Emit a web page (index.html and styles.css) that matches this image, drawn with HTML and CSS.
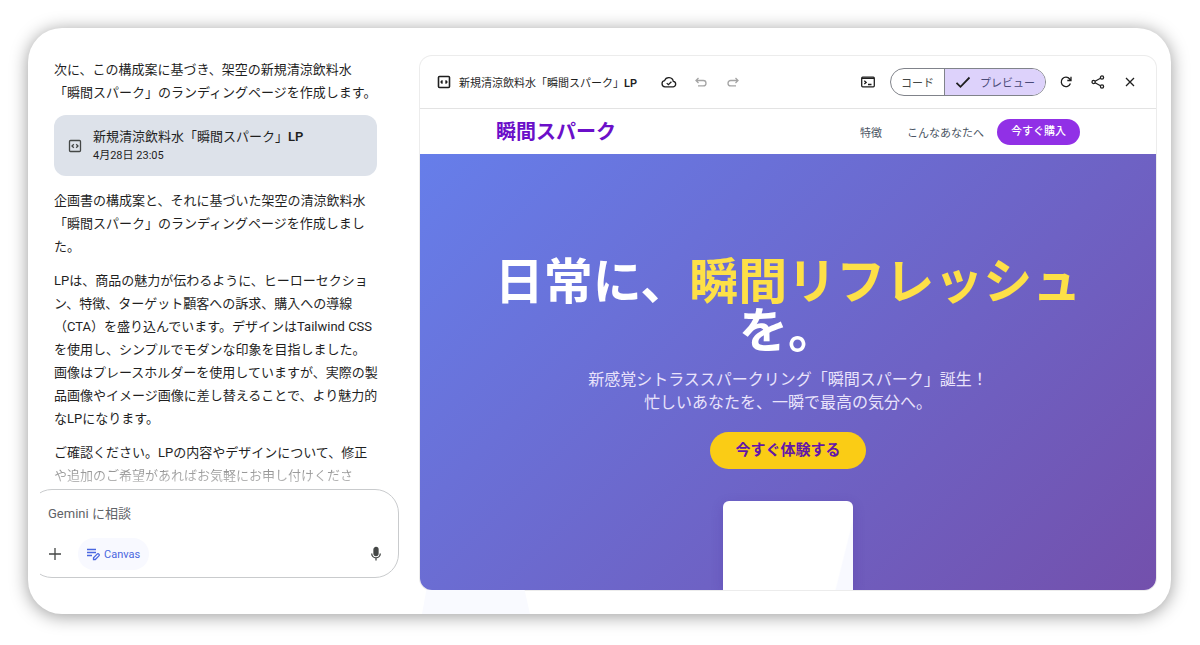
FILE: index.html
```
<!DOCTYPE html>
<html lang="ja">
<head>
    <meta charset="UTF-8">
    <meta name="viewport" content="width=device-width, initial-scale=1.0">
    <title>Gemini Canvas</title>
    <link rel="stylesheet" href="styles.css">
</head>
<body>
    <div class="app">
        <section class="chat">
            <div class="messages">
                <p>次に、この構成案に基づき、架空の新規清涼飲料水<br>「瞬間スパーク」のランディングページを作成します。</p>
                <a class="file" href="#">
                    <svg class="icon" viewBox="0 0 16 16"><rect x="2.5" y="2.5" width="11" height="11" rx="1"/><path d="M6.800 6.200L5 8l1.800 1.800M9.200 6.200L11 8l-1.800 1.800"/></svg>
                    <span class="file-text">
                        <span class="file-name">新規清涼飲料水「瞬間スパーク」<b>LP</b></span>
                        <span class="file-date">4月28日 23:05</span>
                    </span>
                </a>
                <p>企画書の構成案と、それに基づいた架空の清涼飲料水<br>「瞬間スパーク」のランディングページを作成しまし<br>た。</p>
                <p>LPは、商品の魅力が伝わるように、ヒーローセクショ<br>ン、特徴、ターゲット顧客への訴求、購入への導線<br>（CTA）を盛り込んでいます。デザインはTailwind CSS<br>を使用し、シンプルでモダンな印象を目指しました。<br>画像はプレースホルダーを使用していますが、実際の製<br>品画像やイメージ画像に差し替えることで、より魅力的<br>なLPになります。</p>
                <p>ご確認ください。LPの内容やデザインについて、修正<br><span class="fade">や追加のご希望があればお気軽にお申し付けくださ</span></p>
            </div>
            <div class="composer">
                <form class="composer-box">
                    <input class="prompt" type="text" placeholder="Gemini に相談" aria-label="Gemini に相談">
                    <div class="tools">
                        <button class="icon-btn" type="button" aria-label="追加"><svg class="icon" viewBox="0 0 16 16"><path d="M8 2v12M2 8h12"/></svg></button>
                        <button class="chip" type="button">
                            <svg class="icon" viewBox="0 0 16 16"><path d="M2 3.500h9M2 6.500h9M2 9.500h5"/><path d="M8.500 13.500v-1.800l3.600-3.600a1.270 1.270 0 0 1 1.800 1.800l-3.600 3.600z"/></svg>
                            Canvas
                        </button>
                        <button class="icon-btn mic" type="button" aria-label="マイク"><svg class="icon" viewBox="0 0 16 16"><rect class="solid" x="6" y="1.500" width="4" height="8" rx="2"/><path d="M3.700 7.500a4.300 4.300 0 0 0 8.600 0M8 11.800V14.500"/></svg></button>
                    </div>
                </form>
            </div>
        </section>

        <section class="canvas">
            <div class="panel">
                <div class="toolbar">
                    <svg class="icon bold" viewBox="0 0 16 16"><rect x="2.500" y="2.500" width="11" height="11" rx="1"/><path d="M6.500 6.500L5.200 8l1.300 1.500M9.500 6.500L10.800 8 9.500 9.500"/></svg>
                    <span class="title">新規清涼飲料水「瞬間スパーク」<b>LP</b></span>
                    <div class="history">
                        <button class="icon-btn" type="button" aria-label="保存済み"><svg class="icon" viewBox="0 0 16 16"><path d="M4 12.800a3.100 3.100 0 0 1-.4-6.150A4.500 4.500 0 0 1 12.300 7.400 2.720 2.720 0 0 1 12.300 12.800z"/><path d="M5.700 9.100l1.700 1.600 3-3"/></svg></button>
                        <button class="icon-btn" type="button" aria-label="元に戻す" disabled><svg class="icon" viewBox="0 0 16 16"><path d="M5.500 4L3 6.500l2.500 2.500M3 6.500h7.300a2.700 2.700 0 0 1 0 5.400H5"/></svg></button>
                        <button class="icon-btn" type="button" aria-label="やり直す" disabled><svg class="icon" viewBox="0 0 16 16"><path d="M10.500 4L13 6.500l-2.500 2.500M13 6.500H5.700a2.700 2.700 0 0 0 0 5.400H11"/></svg></button>
                    </div>
                    <div class="actions">
                        <button class="icon-btn" type="button" aria-label="コンソール"><svg class="icon" viewBox="0 0 16 16"><rect x="1.700" y="3.200" width="12.600" height="9.600" rx="1"/><path d="M2 4.400h12M4.300 6.700l1.900 1.700-1.900 1.700M8 10.500h3.500"/></svg></button>
                        <div class="toggle">
                            <button type="button">コード</button>
                            <button class="active" type="button">
                                <svg class="icon" viewBox="0 0 16 16"><path d="M1.500 8.800l4 4L14.500 3.500"/></svg>
                                プレビュー
                            </button>
                        </div>
                        <button class="icon-btn" type="button" aria-label="更新"><svg class="icon" viewBox="0 0 16 16"><path d="M12.400 9.500A4.700 4.700 0 1 1 11.700 5L12.800 6.200M13 2.800v3.700H9.300"/></svg></button>
                        <button class="icon-btn" type="button" aria-label="共有"><svg class="icon" viewBox="0 0 16 16"><circle cx="12" cy="3.500" r="1.600"/><circle cx="3.600" cy="8" r="1.600"/><circle cx="12" cy="12.500" r="1.600"/><path d="M5 7.200l5.500-3M5 8.800l5.500 3"/></svg></button>
                        <button class="icon-btn" type="button" aria-label="閉じる"><svg class="icon" viewBox="0 0 16 16"><path d="M4 4l8 8M12 4l-8 8"/></svg></button>
                    </div>
                </div>

                <div class="site-header">
                    <a class="logo" href="#">瞬間スパーク</a>
                    <nav>
                        <a href="#">特徴</a>
                        <a href="#">こんなあなたへ</a>
                    </nav>
                    <a class="buy" href="#">今すぐ購入</a>
                </div>

                <div class="hero">
                    <h1>日常に、<span>瞬間リフレッシュ</span><br>を。</h1>
                    <p>新感覚シトラススパークリング「瞬間スパーク」誕生！<br>忙しいあなたを、一瞬で最高の気分へ。</p>
                    <a class="cta" href="#">今すぐ体験する</a>
                    <div class="product"></div>
                </div>
            </div>
            <div class="tint"></div>
        </section>
    </div>
</body>
</html>
```
FILE: styles.css
```
*{
    box-sizing: border-box;
    margin: 0;
    padding: 0;
}
body{
    display: flex;
    min-height: 100vh;
    padding: 28px 29px 31px 28px;
    background-color: #fff;
    color: #1f1f1f;
    font-family: Roboto, "Noto Sans CJK JP", sans-serif;
    font-size: 13px;
}
a{
    color: inherit;
    text-decoration: none;
}
button{
    border: none;
    background: none;
    color: inherit;
    font-family: inherit;
    cursor: pointer;
}
b{
    font-weight: 600;
}
.icon{
    width: 16px;
    height: 16px;
    flex: none;
    fill: none;
    stroke: currentColor;
    stroke-width: 1.3;
}
.icon.bold{
    stroke-width: 1.6;
}
.solid{
    fill: currentColor;
}
.icon-btn{
    display: flex;
    width: 16px;
    height: 16px;
}
.icon-btn:disabled{
    color: #a5a5a5;
}

.app{
    display: flex;
    flex: 1;
    border-radius: 34px;
    background-color: #fff;
    box-shadow: 0 2px 18px rgba(0, 0, 0, 0.4);
}

/* left column */
.chat{
    display: flex;
    flex-direction: column;
    flex: none;
    width: 392px;
    padding: 30px 21px 36px 12px;
}
.messages{
    display: flex;
    flex-direction: column;
    gap: 11px;
    flex: 1;
    padding: 0 22px 0 14px;
    line-height: 23px;
    white-space: nowrap;
}
.file{
    display: flex;
    align-items: center;
    gap: 10px;
    margin-bottom: 2px;
    padding: 10px 13px;
    border-radius: 12px;
    background-color: #dde2ea;
}
.file .icon{
    color: #444746;
}
.file-text{
    display: flex;
    flex-direction: column;
}
.file-date{
    padding-bottom: 2px;
    font-size: 11px;
    line-height: 16px;
}
.fade{
    background-image: linear-gradient(#8a8a8a, #bcbcbc);
    background-clip: text;
    color: transparent;
}

/* the box runs off the left edge of the column */
.composer{
    overflow: hidden;
}
.composer-box{
    display: flex;
    flex-direction: column;
    gap: 13px;
    margin-left: -12px;
    padding: 11px 14px 7px 18px;
    border: 1px solid #c9cbcd;
    border-radius: 24px;
}
.prompt{
    width: 100%;
    height: 24px;
    padding-left: 1px;
    border: none;
    outline: none;
    background: none;
    font-family: inherit;
    font-size: 13px;
}
.prompt::placeholder{
    color: #5f6368;
}
.tools{
    display: flex;
    align-items: center;
    gap: 15px;
    color: #444746;
}
.chip{
    display: flex;
    align-items: center;
    gap: 3px;
    height: 32px;
    padding: 0 9px 0 7px;
    border-radius: 16px;
    background-color: #f8f9ff;
    color: #4a67e0;
    font-size: 11px;
}
.mic{
    margin-left: auto;
}

/* right column */
.canvas{
    display: flex;
    flex-direction: column;
    flex: 1;
    min-width: 0;
    padding: 28px 15px 0 0;
}
.panel{
    display: flex;
    flex-direction: column;
    flex: 1;
    overflow: hidden;
    border-radius: 12px;
    box-shadow: 0 0 0 1px #ececec;
}
.tint{
    width: 108px;
    height: 24px;
    margin-left: 2px;
    background-color: #f9faff;
    clip-path: polygon(4% 0, 95% 0, 100% 100%, 0 100%);
}
.toolbar{
    display: flex;
    align-items: center;
    height: 53px;
    padding: 0 18px 0 16px;
    border-bottom: 1px solid #e3e3e3;
}
.title{
    margin-left: 7px;
    font-size: 11px;
    white-space: nowrap;
}
.history{
    display: flex;
    gap: 16px;
    margin-left: 24px;
}
.actions{
    display: flex;
    align-items: center;
    gap: 16px;
    margin-left: auto;
}
.toggle{
    display: flex;
    height: 28px;
    margin: 0 -4px 0 -2px;
    overflow: hidden;
    border: 1px solid #80838a;
    border-radius: 14px;
}
.toggle button{
    display: flex;
    align-items: center;
    gap: 9px;
    padding: 0 10px;
    color: #444746;
    font-size: 11px;
}
.toggle .active{
    border-left: 1px solid #80838a;
    background-color: #ddd2fb;
    color: #4a4a78;
}
.toggle .icon{
    color: #1f1f1f;
    stroke-width: 1.8;
}

/* generated page */
.site-header{
    display: flex;
    align-items: center;
    height: 45px;
    padding: 0 76px;
    color: #4b5563;
    font-size: 11px;
}
.logo{
    color: #6b0fc9;
    font-size: 20px;
    font-weight: 700;
    line-height: 26px;
}
.site-header nav{
    display: flex;
    gap: 25px;
    margin: 0 13px 0 auto;
}
.buy{
    padding: 0 14px;
    border-radius: 13px;
    background-color: #9130e6;
    color: #fff;
    font-weight: 500;
    line-height: 26px;
}
.hero{
    display: flex;
    flex-direction: column;
    align-items: center;
    flex: 1;
    padding-top: 104px;
    background-image: linear-gradient(135deg, #667eea, #7350ac);
    color: #fff;
    text-align: center;
}
.hero h1{
    font-size: 49px;
    font-weight: 700;
    line-height: 49px;
}
.hero h1 span{
    color: #fde047;
}
.hero p{
    margin-top: 12px;
    color: #e9e3fb;
    font-size: 16px;
    line-height: 23px;
}
.cta{
    margin-top: 18px;
    padding: 0 25px;
    border-radius: 19px;
    background-color: #facc15;
    color: #6316a8;
    font-size: 15px;
    font-weight: 700;
    line-height: 37px;
}
.product{
    flex: 1;
    width: 130px;
    min-height: 80px;
    margin-top: 32px;
    border-radius: 6px 6px 0 0;
    background-image: linear-gradient(104deg, #fff 88%, #f8f9ff 89%);
    box-shadow: 0 4px 12px rgba(70, 40, 150, 0.25);
}
```
